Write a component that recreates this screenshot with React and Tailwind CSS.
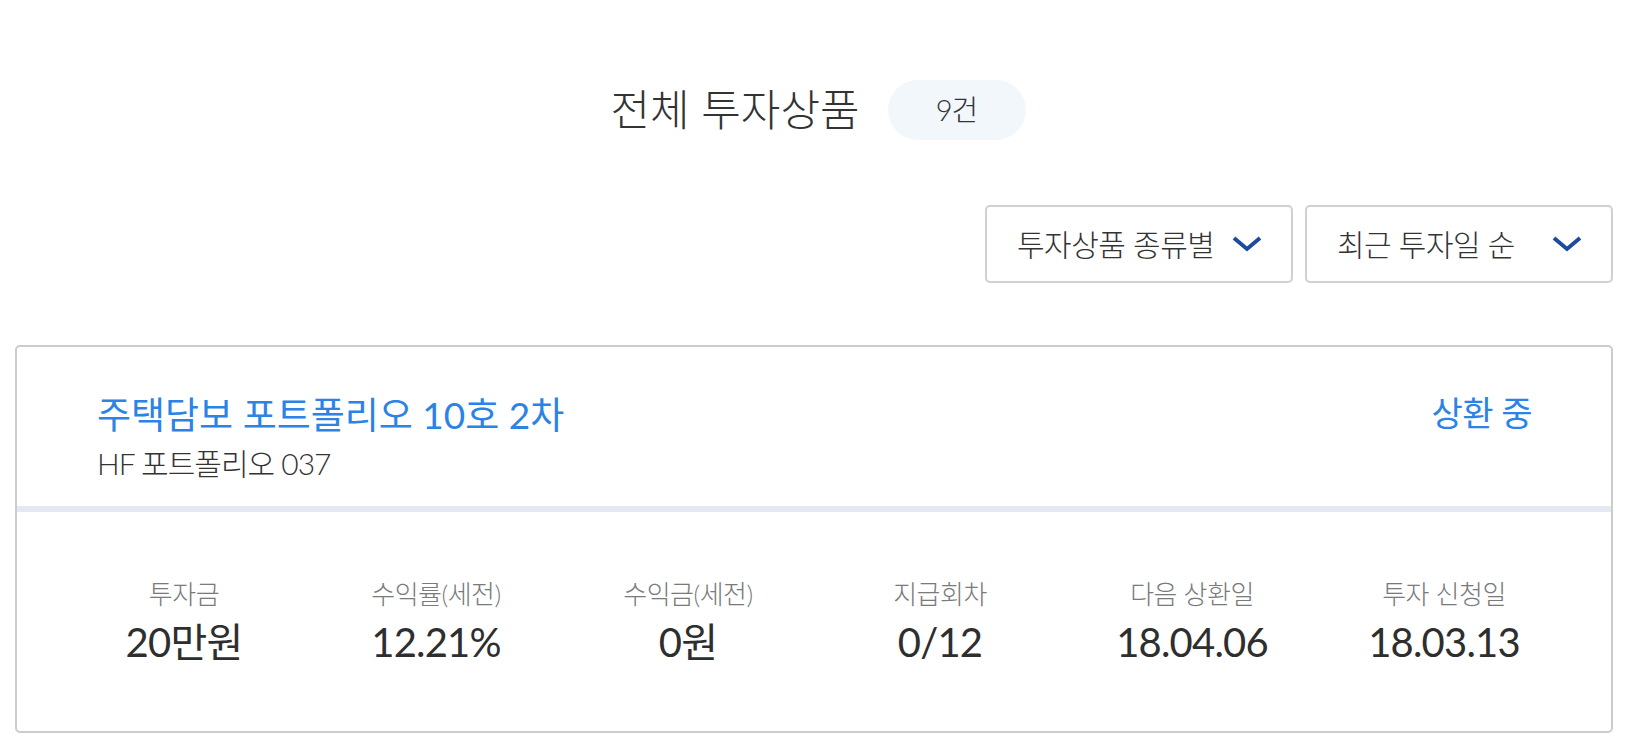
import React from 'react';

const stats = [
  { label: '투자금', value: '20만원' },
  { label: '수익률(세전)', value: '12.21%' },
  { label: '수익금(세전)', value: '0원' },
  { label: '지급회차', value: '0/12' },
  { label: '다음 상환일', value: '18.04.06' },
  { label: '투자 신청일', value: '18.03.13' },
];

function Chevron() {
  return (
    <svg width="30" height="16" viewBox="0 0 30 16" fill="none" className="shrink-0">
      <polyline points="2,2 15,13 28,2" stroke="#1d4c9e" strokeWidth="4" strokeLinejoin="miter" />
    </svg>
  );
}

function SelectBox({ label }) {
  return (
    <button className="w-[308px] h-[78px] border-2 border-[#d0d0d0] rounded-[5px] bg-white pl-[30px] pr-[29px] flex items-center justify-between">
      <span className="text-[30px] tracking-[-0.5px] font-light text-[#333]">{label}</span>
      <Chevron />
    </button>
  );
}

export default function App() {
  return (
    <div className="min-h-screen bg-white font-[Lato,'Noto_Sans_CJK_KR',sans-serif] text-[#333]">
      {/* header */}
      <div className="pt-[80px] flex justify-center items-center gap-[28px]">
        <h2 className="text-[43px] leading-[60px] font-light text-[#333]">전체 투자상품</h2>
        <span className="h-[60px] w-[138px] rounded-full bg-[#f2f7fc] flex items-center justify-center text-[29px] tracking-[-1px] font-light text-[#333]">
          9건
        </span>
      </div>

      {/* filters */}
      <div className="mt-[65px] flex justify-end gap-[12px] pr-[23px]">
        <SelectBox label="투자상품 종류별" />
        <SelectBox label="최근 투자일 순" />
      </div>

      {/* product card */}
      <div className="mt-[62px] ml-[15px] mr-[23px] border-2 border-[#cccccc] rounded-[5px] bg-white">
        <div className="flex justify-between items-start pt-[45px] pb-[26px] pl-[80px] pr-[79px]">
          <div>
            <h3 className="text-[37px] leading-[46px] text-[#2b83e5]">주택담보 포트폴리오 10호 2차</h3>
            <p className="mt-[9px] text-[30px] leading-[33px] tracking-[-1px] font-light text-[#333]">HF 포트폴리오 037</p>
          </div>
          <span className="pt-[2px] text-[34px] leading-[38px] tracking-[-0.5px] text-[#2b83e5]">상환 중</span>
        </div>
        <div className="h-[6px] bg-[#e4e9f1]"></div>
        <div className="grid grid-cols-6 px-[41px] pt-[66px] pb-[66px]">
          {stats.map((s) => (
            <div key={s.label} className="flex flex-col items-center">
              <span className="text-[26px] leading-[32px] tracking-[-0.5px] font-light text-[#7a7a7a]">{s.label}</span>
              <span className="mt-[9px] text-[40px] leading-[46px] tracking-[-0.8px] text-[#2e2e2e]">{s.value}</span>
            </div>
          ))}
        </div>
      </div>
    </div>
  );
}
